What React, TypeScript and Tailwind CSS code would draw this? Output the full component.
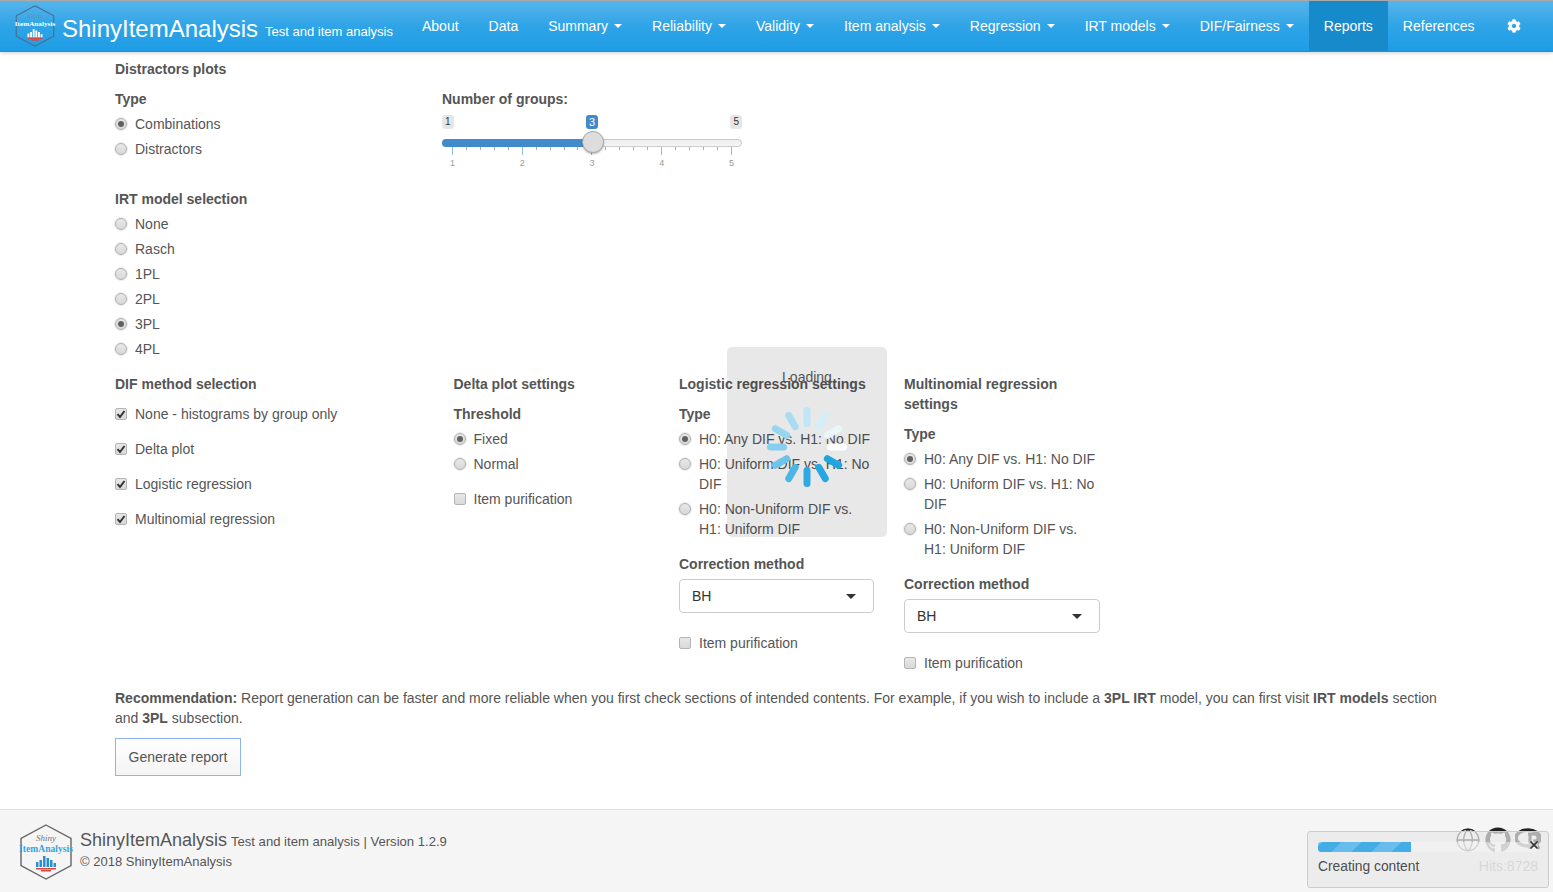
import { Globe, X } from 'lucide-react'
import { FaCog, FaGithub } from 'react-icons/fa'

const NAV_ITEMS = [
  { label: 'About' },
  { label: 'Data' },
  { label: 'Summary', caret: true },
  { label: 'Reliability', caret: true },
  { label: 'Validity', caret: true },
  { label: 'Item analysis', caret: true },
  { label: 'Regression', caret: true },
  { label: 'IRT models', caret: true },
  { label: 'DIF/Fairness', caret: true },
  { label: 'Reports', active: true },
  { label: 'References' },
]

const SPINNER_COLORS = ['#ffffff', '#1fa5e0', '#26a7e1', '#2fa9e2', '#4db5e6', '#6ec3ea', '#88cfef', '#97d5f1', '#a9dcf3', '#bfe5f6', '#d4edf8', '#ebf6fb']

function Logo({ size, light }: { size: number; light?: boolean }) {
  return (
    <svg width={size} height={size} viewBox="0 0 56 56" className="shrink-0 overflow-visible">
      <polygon points="28,1 53,14.5 53,41.5 28,55 3,41.5 3,14.5" fill="none" stroke={light ? '#4a6a85' : '#666'} strokeWidth="1.4" />
      <text x="28" y="17" textAnchor="middle" fontSize="9" fontStyle="italic" fontFamily="Liberation Serif, serif" fill={light ? '#6c8ba6' : '#777'}>Shiny</text>
      <text x="28" y="28" textAnchor="middle" fontSize="9.5" fontWeight="700" textLength="54" fontFamily="Liberation Serif, serif" fill={light ? '#ffffff' : '#2fa4e7'}>ItemAnalysis</text>
      <g fill={light ? '#ffffff' : '#2a8fd0'}>
        <rect x="18" y="38" width="2.5" height="5" />
        <rect x="21.5" y="36" width="2.5" height="7" />
        <rect x="25" y="32" width="2.5" height="11" />
        <rect x="28.5" y="34" width="2.5" height="9" />
        <rect x="32" y="36" width="2.5" height="7" />
        <rect x="35.5" y="39" width="2.5" height="4" />
      </g>
      <g fill="#d9473f">
        <rect x="18" y="44" width="20" height="1.5" />
        <rect x="23" y="46" width="10" height="1.5" />
      </g>
    </svg>
  )
}

function Radio({ label, checked }: { label: React.ReactNode; checked?: boolean }) {
  return (
    <div className="flex items-start gap-[8px]">
      <span className="mt-[4px] flex h-[12px] w-[12px] shrink-0 items-center justify-center rounded-full border border-[#b0b0b0] bg-gradient-to-b from-[#e8e8e8] to-[#d8d8d8] shadow-[0_0_0_1px_#ececec]">
        {checked && <span className="h-[6px] w-[6px] rounded-full bg-[#606060]" />}
      </span>
      <span>{label}</span>
    </div>
  )
}

function Check({ label, checked }: { label: string; checked?: boolean }) {
  return (
    <div className="flex items-start gap-[8px]">
      <span className="mt-[4px] flex h-[12px] w-[12px] shrink-0 items-center justify-center rounded-[2px] border border-[#b4b4b4] bg-gradient-to-b from-[#e8e8e8] to-[#d8d8d8]">
        {checked && (
          <svg width="10" height="10" viewBox="0 0 10 10">
            <path d="M1.5 5.2 L4 8 L8.5 2" fill="none" stroke="#333" strokeWidth="2" />
          </svg>
        )}
      </span>
      <span>{label}</span>
    </div>
  )
}

function Select() {
  return (
    <div className="flex h-[34px] items-center justify-between rounded-[4px] border border-[#cccccc] bg-white pr-[17px] pl-[12px]">
      <span className="text-[#333]">BH</span>
      <span className="h-0 w-0 border-x-[5px] border-t-[5px] border-x-transparent border-t-[#333]" />
    </div>
  )
}

function DifTypeOptions() {
  return (
    <div className="flex flex-col gap-[5px]">
      <Radio checked label="H0: Any DIF vs. H1: No DIF" />
      <Radio label="H0: Uniform DIF vs. H1: No DIF" />
      <Radio label={<>H0: Non-Uniform DIF vs.<br />H1: Uniform DIF</>} />
    </div>
  )
}

function GroupSlider() {
  return (
    <div className="relative h-[72px] w-[300px]">
      <div className="flex justify-between pt-[6px]">
        <span className="rounded-[3px] bg-[#e6e6e6] px-[3px] text-[10px] leading-[14px] text-[#333]">1</span>
        <span className="absolute left-[144px] rounded-[3px] bg-[#428bca] px-[3px] text-[11px] leading-[14px] text-white">3</span>
        <span className="rounded-[3px] bg-[#e6e6e6] px-[3px] text-[10px] leading-[14px] text-[#333]">5</span>
      </div>
      <div className="mt-[10px] h-[8px] rounded-full border border-[#cccccc] bg-gradient-to-b from-[#eeeeee] to-[#f5f5f5]">
        <div className="-mt-px -ml-px h-[8px] w-[150px] rounded-l-full bg-[#428bca]" />
      </div>
      <span className="absolute top-[22px] left-[140px] h-[22px] w-[22px] rounded-full border border-[#aaaaaa] bg-[#dddddd] shadow-[0_1px_2px_rgba(0,0,0,0.3)]" />
      <div className="flex h-[8px] items-start justify-between px-[10px]">
        {Array.from({ length: 21 }, (_, i) => (
          <span key={i} className={i % 5 === 0 ? 'h-[8px] w-px bg-[#8fbce0]' : 'h-[3px] w-px bg-[#aaaaaa]'} />
        ))}
      </div>
      <div className="mt-[2px] flex justify-between px-[8px] text-[9px] leading-[12px] text-[#999]">
        {[1, 2, 3, 4, 5].map((n) => (
          <span key={n}>{n}</span>
        ))}
      </div>
    </div>
  )
}

function Spinner() {
  return (
    <svg width="90" height="90" viewBox="-45 -45 90 90">
      {SPINNER_COLORS.map((color, i) => (
        <rect key={i} x="20" y="-3.5" width="20" height="7" rx="3.5" fill={color} transform={`rotate(${i * 30})`} />
      ))}
    </svg>
  )
}

export default function App() {
  return (
    <div
      className="relative flex h-[892px] flex-col overflow-hidden bg-white text-[14px] leading-[20px] text-[#555555]"
      style={{ fontFamily: '"Liberation Sans", Arial, sans-serif' }}
    >
      {/* Navbar */}
      <header className="flex h-[52px] shrink-0 items-stretch border-t border-b border-t-[#a9a9a9] border-b-[#1995dc] bg-gradient-to-b from-[#54b4eb] via-[#2fa4e7] to-[#1d9ce5] text-white shadow-[0_1px_4px_rgba(0,0,0,0.2)]">
        <div className="flex w-[407px] items-center pl-[14px]">
          <Logo size={42} light />
          <span className="mt-[5px] ml-[6px] text-[24px] leading-[32px]">ShinyItemAnalysis</span>
          <span className="mt-[12px] ml-[7px] text-[13px] leading-[20px]">Test and item analysis</span>
        </div>
        {NAV_ITEMS.map((item) => (
          <div key={item.label} className={`flex items-center gap-[6px] px-[15px] ${item.active ? 'bg-[#178acc]' : ''}`}>
            <span>{item.label}</span>
            {item.caret && <span className="h-0 w-0 border-x-[4px] border-t-[4px] border-x-transparent border-t-white" />}
          </div>
        ))}
        <div className="flex items-center px-[18px]">
          <FaCog size={14} />
        </div>
      </header>

      {/* Main */}
      <main className="flex-1 pt-[7px] pr-[100px] pl-[115px]">
        <div className="font-bold">Distractors plots</div>

        <div className="mt-[10px] flex">
          <div className="w-[327px]">
            <div className="mb-[5px] font-bold">Type</div>
            <div className="flex flex-col gap-[5px]">
              <Radio checked label="Combinations" />
              <Radio label="Distractors" />
            </div>
          </div>
          <div>
            <div className="font-bold">Number of groups:</div>
            <GroupSlider />
          </div>
        </div>

        <div className="mt-[8px]">
          <div className="mb-[5px] font-bold">IRT model selection</div>
          <div className="flex flex-col gap-[5px]">
            <Radio label="None" />
            <Radio label="Rasch" />
            <Radio label="1PL" />
            <Radio label="2PL" />
            <Radio checked label="3PL" />
            <Radio label="4PL" />
          </div>
        </div>

        <div className="mt-[15px] flex">
          <div className="w-[338.5px]">
            <div className="mb-[10px] font-bold">DIF method selection</div>
            <div className="flex flex-col gap-[15px]">
              <Check checked label="None - histograms by group only" />
              <Check checked label="Delta plot" />
              <Check checked label="Logistic regression" />
              <Check checked label="Multinomial regression" />
            </div>
          </div>

          <div className="w-[225.5px]">
            <div className="mb-[10px] font-bold">Delta plot settings</div>
            <div className="mb-[5px] font-bold">Threshold</div>
            <div className="flex flex-col gap-[5px]">
              <Radio checked label="Fixed" />
              <Radio label="Normal" />
            </div>
            <div className="mt-[15px]">
              <Check label="Item purification" />
            </div>
          </div>

          <div className="w-[225px] pr-[30px]">
            <div className="mb-[10px] font-bold whitespace-nowrap">Logistic regression settings</div>
            <div className="mb-[5px] font-bold">Type</div>
            <DifTypeOptions />
            <div className="mt-[15px] mb-[5px] font-bold">Correction method</div>
            <div className="w-[195px]">
              <Select />
            </div>
            <div className="mt-[20px]">
              <Check label="Item purification" />
            </div>
          </div>

          <div className="w-[196px]">
            <div className="mb-[10px] font-bold">Multinomial regression settings</div>
            <div className="mb-[5px] font-bold">Type</div>
            <DifTypeOptions />
            <div className="mt-[15px] mb-[5px] font-bold">Correction method</div>
            <Select />
            <div className="mt-[20px]">
              <Check label="Item purification" />
            </div>
          </div>
        </div>

        <p className="mt-[15px]">
          <b>Recommendation:</b> Report generation can be faster and more reliable when you first check sections of intended contents. For example, if you wish to include a <b>3PL IRT</b> model, you can first visit <b>IRT models</b> section and <b>3PL</b> subsection.
        </p>

        <button className="mt-[10px] h-[38px] w-[126px] border border-[#8fb4ec] bg-gradient-to-b from-white to-[#f4f4f4] text-[#555555]">
          Generate report
        </button>
      </main>

      {/* Footer */}
      <footer className="flex h-[83px] shrink-0 items-start justify-between border-t border-[#e3e3e3] bg-[#f5f5f5] pr-[12px] pl-[18px]">
        <div className="mt-[14px] flex items-start gap-[6px]">
          <Logo size={56} />
          <div className="mt-[1px]">
            <div className="leading-[30px]">
              <span className="text-[18px]">ShinyItemAnalysis</span> <span className="text-[13.1px]">Test and item analysis | Version 1.2.9</span>
            </div>
            <div className="-mt-[5px] text-[13px]">© 2018 ShinyItemAnalysis</div>
          </div>
        </div>
        <div className="mt-[17px] flex flex-col items-end">
          <div className="flex items-center gap-[4px] text-[#222]">
            <Globe size={26} strokeWidth={1.2} />
            <FaGithub size={26} />
            <svg width="26" height="26" viewBox="0 0 26 26">
              <ellipse cx="13" cy="11" rx="12" ry="8" fill="none" stroke="#222" strokeWidth="3.5" />
              <path d="M13 7 H20 Q23 7 23 11 Q23 14 20 14 L24 22 M15 7 V22" fill="none" stroke="#222" strokeWidth="3" />
            </svg>
          </div>
          <div className="mt-[3px] mr-[3px] text-[#b0b0b0]">Hits:8728</div>
        </div>
      </footer>

      {/* Loading overlay */}
      <div className="absolute top-[347px] left-[727px] flex h-[190px] w-[160px] flex-col items-center rounded-[5px] bg-black/[0.09] pt-[20px]">
        <span>Loading</span>
        <div className="mt-[15px]">
          <Spinner />
        </div>
      </div>

      {/* Progress notification */}
      <div className="absolute top-[831px] left-[1307px] h-[57px] w-[242px] rounded-[3px] border border-[#cccccc] bg-[#e8e8e8]/[0.7] px-[10px] pt-[10px]">
        <div className="h-[10px] w-[220px] overflow-hidden rounded-[3px] bg-[#f5f5f5]/50">
          <div className="h-full w-[93px] bg-[repeating-linear-gradient(-45deg,#45ade6_0,#45ade6_14px,#68bdec_14px,#68bdec_28px)]" />
        </div>
        <div className="mt-[5px] text-[13.8px] text-[#4d4d4d]">Creating content</div>
        <X size={12} strokeWidth={3.5} className="absolute top-[7px] right-[8px] text-[#333]" />
      </div>
    </div>
  )
}
